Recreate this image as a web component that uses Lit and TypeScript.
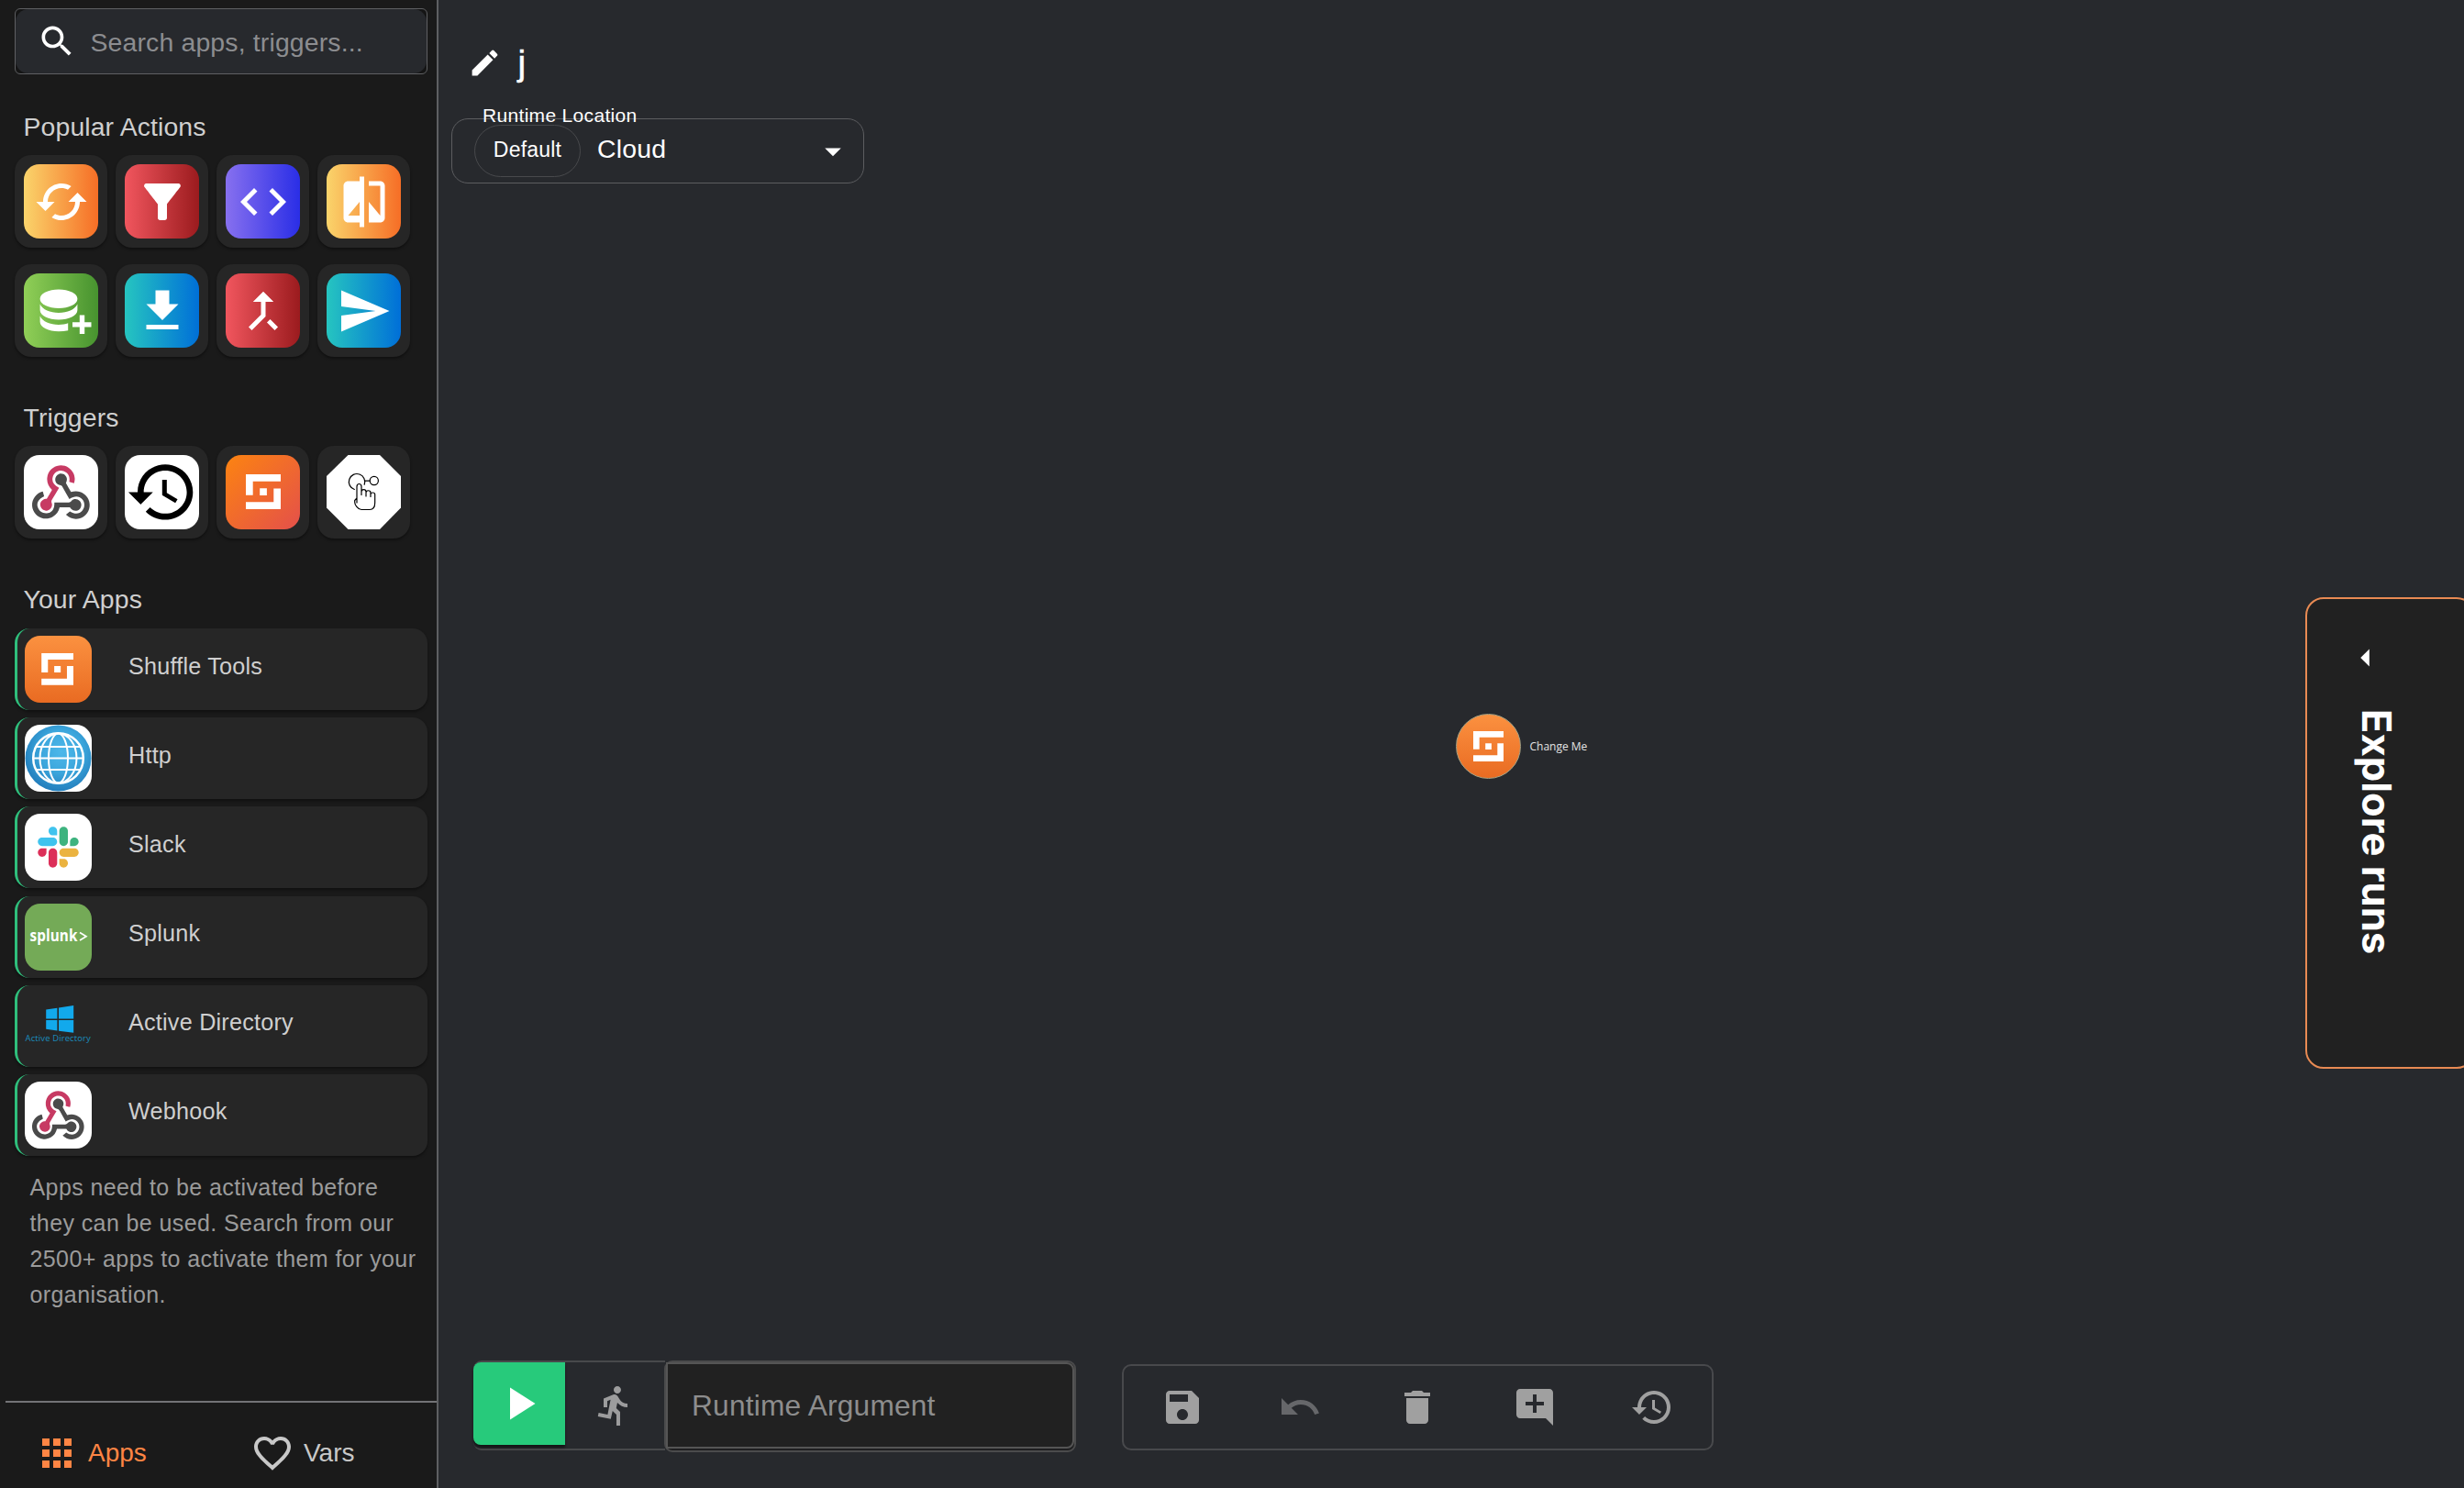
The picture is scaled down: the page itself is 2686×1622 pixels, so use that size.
import { LitElement, html, css, svg } from "lit";
import type { SVGTemplateResult, TemplateResult } from "lit";
import { customElement, property } from "lit/decorators.js";

const paths: Record<string, string> = {
  search:
    "M15.5 14h-.79l-.28-.27C15.41 12.59 16 11.11 16 9.5 16 5.91 13.09 3 9.5 3S3 5.91 3 9.5 5.91 16 9.5 16c1.61 0 3.09-.59 4.23-1.57l.27.28v.79l5 4.99L20.49 19l-4.99-5zm-6 0C7.01 14 5 11.99 5 9.5S7.01 5 9.5 5 14 7.01 14 9.5 11.99 14 9.5 14z",
  loop: "m19 8-4 4h3c0 3.31-2.69 6-6 6-1.01 0-1.97-.25-2.8-.7l-1.46 1.46C8.97 19.54 10.43 20 12 20c4.42 0 8-3.58 8-8h3l-4-4zM6 12c0-3.31 2.69-6 6-6 1.01 0 1.97.25 2.8.7l1.46-1.46C15.03 4.46 13.57 4 12 4c-4.42 0-8 3.58-8 8H1l4 4 4-4H6z",
  filter:
    "M4.25 5.61C6.27 8.2 10 13 10 13v6c0 .55.45 1 1 1h2c.55 0 1-.45 1-1v-6s3.72-4.8 5.74-7.39c.51-.66.04-1.61-.79-1.61H5.04c-.83 0-1.3.95-.79 1.61z",
  code: "M9.4 16.6 4.8 12l4.6-4.6L8 6l-6 6 6 6 1.4-1.4zm5.2 0 4.6-4.6-4.6-4.6L16 6l6 6-6 6-1.4-1.4z",
  compare:
    "M10 3H5c-1.1 0-2 .9-2 2v14c0 1.1.9 2 2 2h5v2h2V1h-2v2zm0 15H5l5-6v6zm9-15h-5v2h5v13l-5-6v9h5c1.1 0 2-.9 2-2V5c0-1.1-.9-2-2-2z",
  download: "M19 9h-4V3H9v6H5l7 7 7-7zM5 18v2h14v-2H5z",
  merge:
    "M17 20.41 18.41 19 15 15.59 13.59 17 17 20.41zM7.5 8H11v5.59L5.59 19 7 20.41l6-6V8h3.5L12 3.5 7.5 8z",
  send: "M2.01 21 23 12 2.01 3 2 10l15 2-15 2z",
  history:
    "M13 3c-4.97 0-9 4.03-9 9H1l3.89 3.89.07.14L9 12H6c0-3.87 3.13-7 7-7s7 3.13 7 7-3.13 7-7 7c-1.93 0-3.68-.79-4.94-2.06l-1.42 1.42C8.27 19.99 10.51 21 13 21c4.97 0 9-4.03 9-9s-4.03-9-9-9zm-1 5v5l4.28 2.54.72-1.21-3.5-2.08V8H12z",
  apps: "M4 8h4V4H4v4zm6 12h4v-4h-4v4zm-6 0h4v-4H4v4zm0-6h4v-4H4v4zm6 0h4v-4h-4v4zm6-10v4h4V4h-4zm-6 4h4V4h-4v4zm6 6h4v-4h-4v4zm0 6h4v-4h-4v4z",
  heart:
    "M16.5 3c-1.74 0-3.41.81-4.5 2.09C10.91 3.81 9.24 3 7.5 3 4.42 3 2 5.42 2 8.5c0 3.78 3.4 6.86 8.55 11.54L12 21.35l1.45-1.32C18.6 15.36 22 12.28 22 8.5 22 5.42 19.58 3 16.5 3zm-4.4 15.55-.1.1-.1-.1C7.14 14.24 4 11.39 4 8.5 4 6.5 5.5 5 7.5 5c1.54 0 3.04.99 3.57 2.36h1.87C13.46 5.99 14.96 5 16.5 5c2 0 3.5 1.5 3.5 3.5 0 2.89-3.14 5.74-7.9 10.05z",
  edit: "M3 17.25V21h3.75L17.81 9.94l-3.75-3.75L3 17.25zM20.71 7.04c.39-.39.39-1.02 0-1.41l-2.34-2.34a.9959.9959 0 0 0-1.41 0l-1.83 1.83 3.75 3.75 1.83-1.83z",
  down: "M7 10l5 5 5-5z",
  left: "M14 7l-5 5 5 5z",
  play: "M8 5v14l11-7z",
  run: "M13.49 5.48c1.1 0 2-.9 2-2s-.9-2-2-2-2 .9-2 2 .9 2 2 2zm-3.6 13.9 1-4.4 2.1 2v6h2v-7.5l-2.1-2 .6-3c1.3 1.5 3.3 2.5 5.5 2.5v-2c-1.9 0-3.5-1-4.3-2.4l-1-1.6c-.4-.6-1-1-1.7-1-.3 0-.5.1-.8.1l-5.2 2.2v4.7h2v-3.4l1.8-.7-1.6 8.1-4.9-1-.4 2 7 1.4z",
  save: "M17 3H5c-1.11 0-2 .9-2 2v14c0 1.1.89 2 2 2h14c1.1 0 2-.9 2-2V7l-4-4zm-5 16c-1.66 0-3-1.34-3-3s1.34-3 3-3 3 1.34 3 3-1.34 3-3 3zm3-10H5V5h10v4z",
  undo: "M12.5 8c-2.65 0-5.05.99-6.9 2.6L2 7v9h9l-3.62-3.62c1.39-1.16 3.16-1.88 5.12-1.88 3.54 0 6.55 2.31 7.6 5.5l2.37-.78C21.08 11.03 17.15 8 12.5 8z",
  trash: "M6 19c0 1.1.9 2 2 2h8c1.1 0 2-.9 2-2V7H6v12zM19 4h-3.500l-1-1h-5l-1 1H5v2h14V4z",
  comment:
    "M21.99 4c0-1.1-.89-2-1.99-2H4c-1.1 0-2 .9-2 2v12c0 1.1.9 2 2 2h14l4 4-.01-18zM17 11h-4v4h-2v-4H7V9h4V5h2v4h4v2z",
};

const icon = (name: string, size: number) => html`
  <svg width=${size} height=${size} viewBox="0 0 24 24" fill="currentColor"><path d=${paths[name]} /></svg>
`;

/* Shuffle mark drawn in a 38 unit box. */
const shuffleMark = svg`
  <path d="M0 0H38V7.7H7.7V22.8H0ZM30.3 15.4H38V38H0V30.3H30.3ZM15.2 15.2H22.9V22.9H15.2Z" fill="#fff" />
`;

const webhookMark = svg`
  <path fill="#C73A63" d="M119.540432,100.502743 C108.930124,118.338815 98.7646301,135.611455 88.3876025,152.753617 C85.7226696,157.154315 84.4040417,160.738531 86.5332204,166.333309 C92.4107024,181.787152 84.1193605,196.825836 68.5350381,200.908244 C53.8383677,204.759349 39.5192953,195.099955 36.6032893,179.365384 C34.0194114,165.437749 44.8274148,151.78491 60.1824106,149.608284 C61.4694072,149.424428 62.7821041,149.402681 64.944891,149.240571 C72.469175,136.623655 80.1773157,123.700312 88.3025935,110.073173 C73.611854,95.4654658 64.8677898,78.3885437 66.803227,57.2292132 C68.1712787,42.2715849 74.0527146,29.3462646 84.8033863,18.7517722 C105.393354,-1.53572199 136.805164,-4.82141828 161.048542,10.7510424 C184.333097,25.7086706 194.996783,54.8450075 185.906752,79.7822957 C179.052655,77.9239597 172.151111,76.049808 164.563565,73.9917997 C167.418285,60.1274266 165.306899,47.6765751 155.95591,37.0109123 C149.777932,29.9690049 141.850349,26.2780332 132.835442,24.9178894 C114.764113,22.1877169 97.0209573,33.7983633 91.7563309,51.5355878 C85.7800012,71.6669027 94.8245623,88.1111998 119.540432,100.502743 Z" />
  <path fill="#4B4B4B" d="M149.841194,79.4106285 C157.316054,92.5969067 164.905578,105.982857 172.427885,119.246236 C210.44865,107.483365 239.114472,128.530009 249.398582,151.063322 C261.81978,178.282014 253.328765,210.520191 228.933162,227.312431 C203.893073,244.551464 172.226236,241.605803 150.040866,219.46195 C155.694953,214.729124 161.376716,209.974552 167.44794,204.895759 C189.360489,219.088306 208.525074,218.420096 222.753207,201.614016 C234.885769,187.277151 234.622834,165.900356 222.138374,151.863988 C207.730339,135.66681 188.431321,135.172572 165.103273,150.721309 C155.426087,133.553447 145.58086,116.521995 136.210101,99.2295848 C133.05093,93.4015266 129.561608,90.0209366 122.440622,88.7873178 C110.547271,86.7253555 102.868785,76.5124151 102.408155,65.0698097 C101.955433,53.7537294 108.621719,43.5249733 119.04224,39.5394355 C129.363912,35.5914599 141.476705,38.7783085 148.419765,47.554004 C154.093621,54.7244134 155.896602,62.7943365 152.911402,71.6372484 C152.081082,74.1025091 151.00562,76.4886916 149.841194,79.4106285 Z" />
  <path fill="#4A4A4A" d="M167.706921,187.209935 L121.936499,187.209935 C117.54964,205.253587 108.074103,219.821756 91.7464461,229.085759 C79.0544063,236.285822 65.3738898,238.72736 50.8136292,236.376762 C24.0061432,232.053165 2.08568567,207.920497 0.156179306,180.745298 C-2.02835403,149.962159 19.1309765,122.599149 47.3341915,116.452801 C49.2814904,123.524363 51.2485589,130.663141 53.1958579,137.716911 C27.3195169,150.919004 18.3639187,167.553089 25.6054984,188.352614 C31.9811726,206.657224 50.0900643,216.690262 69.7528413,212.809503 C89.8327554,208.847688 99.9567329,192.160226 98.7211371,165.37844 C117.75722,165.37844 136.809118,165.180745 155.847178,165.475311 C163.280522,165.591951 169.019617,164.820939 174.620326,158.267339 C183.840836,147.48306 200.811003,148.455721 210.741239,158.640984 C220.88894,169.049642 220.402609,185.79839 209.663799,195.768166 C199.302587,205.38802 182.933414,204.874012 173.240413,194.508846 C171.247644,192.37176 169.677943,189.835329 167.706921,187.209935 Z" />
`;

const art = (size: number, content: SVGTemplateResult) => html`
  <svg width=${size} height=${size} viewBox="0 0 ${size} ${size}">${content}</svg>
`;

const databaseArt = art(81, svg`
  <g fill="#fff">
    <ellipse cx="38" cy="27.7" rx="20.4" ry="10.3" />
    <path d="M17.6 33.5C20.5 39.5 28.5 43 38 43S55.5 39.5 58.4 33.5V40C58.4 46 49 50.5 38 50.5S17.6 46 17.6 40Z" />
    <path d="M17.6 46.5C20.5 52.5 28.5 56 38 56C42 56 45.5 55.3 48.2 54.3V62.3C45 62.9 41.5 63.3 38 63.3C27 63.3 17.6 58.8 17.6 52.8Z" />
    <path d="M60.8 45.5H66.2V53.3H73.5V58.5H66.2V66H60.8V58.5H53V53.3H60.8Z" />
  </g>
`);

const webhookTile = art(81, svg`<g transform="translate(9 11) scale(.246)">${webhookMark}</g>`);
const historyTile = art(81, svg`<g transform="translate(.6 .2) scale(3.35)"><path d=${paths.history} /></g>`);
const shuffleTile = art(81, svg`<g transform="translate(22 21)">${shuffleMark}</g>`);
const inputTile = art(81, svg`
  <path d="M23.5 0H58L81 23V57.5L58 81H23.5L0 57.5V23Z" fill="#fff" />
  <g fill="none" stroke="#000" stroke-width="1.2" stroke-linejoin="round" stroke-linecap="round">
    <path d="M30.3 37.5A8.7 8.7 0 1 1 41.2 32.2" />
    <circle cx="51.8" cy="28" r="4.6" />
    <path d="M41.6 28.2H47" />
    <path d="M33 49V34.5C33 30.5 38 30.5 38 34.5V43.5M38 40C38 36.8 43 36.8 43 40V45M43 41C43 38 48 38 48 41V45.5M48 43C48 40.3 52.7 40.3 52.7 43V52C52.7 56.5 50.5 59.5 47 59.5H38C34 59.5 30.7 54 30.7 51.5V49.5L33 47V52" />
  </g>
`);

const shuffleApp = art(73, svg`
  <g transform="translate(18.2 19) scale(.916)">${shuffleMark}</g>
`);
const httpApp = art(73, svg`
  <defs>
    <radialGradient id="globe" cx=".55" cy=".4" r=".65">
      <stop offset="0" stop-color="#4db8ea" /><stop offset=".5" stop-color="#3ba6dc" /><stop offset="1" stop-color="#1f78b8" />
    </radialGradient>
  </defs>
  <circle cx="36.5" cy="36.5" r="36" fill="url(#globe)" />
  <g fill="none" stroke="#fff" stroke-width="2">
    <circle cx="36.5" cy="36.5" r="27.3" stroke-width="2.5" />
    <ellipse cx="36.5" cy="36.5" rx="10.5" ry="27" />
    <ellipse cx="36.5" cy="36.5" rx="20" ry="27" />
    <path d="M9 36.5H64M13 24H60M13 49H60" />
  </g>
`);
const slackApp = art(73, svg`
  <g transform="translate(14 14) scale(.354)">
    <path fill="#DC2F59" d="M27.2 80c0 7.3-5.9 13.2-13.2 13.2C6.7 93.2.8 87.3.8 80c0-7.3 5.9-13.2 13.2-13.2h13.2V80zm6.6 0c0-7.3 5.9-13.2 13.2-13.2 7.3 0 13.2 5.9 13.2 13.2v33c0 7.3-5.9 13.2-13.2 13.2-7.3 0-13.2-5.9-13.2-13.2V80z" />
    <path fill="#3FC3EE" d="M47 27c-7.3 0-13.2-5.9-13.2-13.2C33.8 6.5 39.7.6 47 .6c7.3 0 13.2 5.9 13.2 13.2V27H47zm0 6.7c7.3 0 13.2 5.9 13.2 13.2 0 7.3-5.9 13.2-13.2 13.2H13.9C6.6 60.1.7 54.2.7 46.9c0-7.3 5.9-13.2 13.2-13.2H47z" />
    <path fill="#3EB37F" d="M99.9 46.9c0-7.3 5.9-13.2 13.2-13.2 7.3 0 13.2 5.9 13.2 13.2 0 7.3-5.9 13.2-13.2 13.2H99.9V46.9zm-6.6 0c0 7.3-5.9 13.2-13.2 13.2-7.3 0-13.2-5.9-13.2-13.2V13.8C66.9 6.5 72.8.6 80.1.6c7.3 0 13.2 5.9 13.2 13.2v33.1z" />
    <path fill="#EBB340" d="M80.1 99.8c7.3 0 13.2 5.9 13.2 13.2 0 7.3-5.9 13.2-13.2 13.2-7.3 0-13.2-5.9-13.2-13.2V99.8h13.2zm0-6.6c-7.3 0-13.2-5.9-13.2-13.2 0-7.3 5.9-13.2 13.2-13.2h33.1c7.3 0 13.2 5.9 13.2 13.2 0 7.3-5.9 13.2-13.2 13.2H80.1z" />
  </g>
`);
const splunkApp = art(73, svg`
  <text x="5.5" y="41.3" textLength="52" lengthAdjust="spacingAndGlyphs" font-family="'Open Sans', sans-serif" font-weight="700" font-size="17.5" fill="#fff">splunk</text>
  <path d="M60 31.5L67 35.7L60 40" fill="none" stroke="#fff" stroke-width="1.7" />
`);
const directoryApp = art(73, svg`
  <path fill="#12A9EC" d="M23.2 18.5L35.4 16.7V28.5H23.2ZM37 16.500L53.2 14V28.5H37ZM23.2 30H35.4V41.5L23.2 39.7ZM37 30H53.2V43.8L37 41.7Z" />
  <text x=".5" y="53.2" textLength="71.5" lengthAdjust="spacingAndGlyphs" font-family="'Noto Sans', sans-serif" font-size="9.2" fill="#1B87B5">Active Directory</text>
`);
const webhookApp = art(73, svg`<g transform="translate(8 10) scale(.222)">${webhookMark}</g>`);

interface Tile {
  look: string;
  content: TemplateResult;
}

const actions: Tile[] = [
  { look: "orange", content: icon("loop", 60) },
  { look: "red", content: icon("filter", 60) },
  { look: "purple", content: icon("code", 60) },
  { look: "orange", content: icon("compare", 60) },
  { look: "green", content: databaseArt },
  { look: "blue", content: icon("download", 60) },
  { look: "red", content: icon("merge", 60) },
  { look: "blue", content: icon("send", 60) },
];

const triggers: Tile[] = [
  { look: "white", content: webhookTile },
  { look: "white", content: historyTile },
  { look: "ember", content: shuffleTile },
  { look: "plain", content: inputTile },
];

const apps = [
  { name: "Shuffle Tools", look: "shuffle", content: shuffleApp },
  { name: "Http", look: "white", content: httpApp },
  { name: "Slack", look: "white", content: slackApp },
  { name: "Splunk", look: "splunk", content: splunkApp },
  { name: "Active Directory", look: "plain", content: directoryApp },
  { name: "Webhook", look: "white", content: webhookApp },
];

@customElement("tile-grid")
class TileGrid extends LitElement {
  @property({ attribute: false }) tiles: Tile[] = [];

  static styles = css`
    :host { display: grid; grid-template-columns: repeat(4, 101px); gap: 18px 9px; }
    .tile {
      height: 101px; border-radius: 18px; background: #262626; box-sizing: border-box; padding: 10px;
      box-shadow: 0 2px 3px rgba(0, 0, 0, 0.4);
    }
    .face {
      width: 81px; height: 81px; border-radius: 17px; overflow: hidden; color: #fff;
      display: flex; align-items: center; justify-content: center;
    }
    svg { display: block; flex: none; }
    .orange { background: linear-gradient(90deg, #fad46b, #f66e26); }
    .red { background: linear-gradient(90deg, #f1565e, #9b1b1e); }
    .purple { background: linear-gradient(90deg, #8770ef, #2a2ee6); }
    .green { background: linear-gradient(90deg, #90cf57, #47932f); }
    .blue { background: linear-gradient(90deg, #26c5c0, #006fd8); }
    .white { background: #fff; }
    .ember { background: linear-gradient(135deg, #fb8114 5%, #e4504a 100%); }
    .plain { border-radius: 0; }
  `;

  render() {
    return this.tiles.map((t) => html`<div class="tile"><div class="face ${t.look}">${t.content}</div></div>`);
  }
}

@customElement("side-panel")
class SidePanel extends LitElement {
  static styles = css`
    :host {
      display: flex; flex-direction: column; width: 478px; height: 1622px; box-sizing: border-box; flex: none;
      padding-top: 9px; background: #1a1a1a; border-right: 2px solid #5e5f62; color: #cfcfcf;
      font: 28.4px/40px "Liberation Sans", Arial, sans-serif; letter-spacing: 0.12px;
    }
    svg { display: block; flex: none; }
    .search {
      width: 450px; height: 72px; margin-left: 16px; box-sizing: border-box; border: 1px solid #5f6063;
      border-radius: 6px; background: #151515; flex: none;
    }
    .search-inner {
      height: 70px; border-radius: 14px; background: #27292d; display: flex; align-items: center;
      gap: 14.5px; padding-left: 23px; color: #fff; box-sizing: border-box;
    }
    .hint { color: #8c8d90; letter-spacing: 0.16px; padding-top: 1px; }
    .heading { padding-left: 25.5px; margin-bottom: 11px; margin-top: 46px; flex: none; }
    .first { margin-top: 37px; }
    .last { margin-bottom: 12px; }
    .grid { margin-left: 16px; flex: none; }
    .list { display: flex; flex-direction: column; gap: 8.2px; margin-left: 16px; width: 450px; }
    .app {
      height: 89px; box-sizing: border-box; border-left: 3px solid #2fbf7c; border-radius: 16px; background: #262626;
      display: flex; align-items: center; padding-left: 8px; gap: 40px; box-shadow: 0 2px 3px rgba(0, 0, 0, 0.4);
    }
    .logo { width: 73px; height: 73px; border-radius: 17px; overflow: hidden; flex: none; }
    .white { background: #fff; }
    .shuffle { background: linear-gradient(180deg, #fb9140, #e96b22); }
    .splunk { background: #74aa57; }
    .plain { border-radius: 0; }
    .name { font-size: 25.2px; padding-bottom: 8px; letter-spacing: 0.22px; }
    .note {
      margin: 15px 10px 0 32.5px; font-size: 25px; line-height: 39px; color: #9b9b9b; letter-spacing: 0.4px;
      white-space: nowrap;
    }
    .tabs {
      margin: auto 0 0 6px; height: 95px; box-sizing: border-box; border-top: 2px solid #737377;
      display: grid; grid-template-columns: 235px 235px; padding-top: 16px; align-items: center; font-size: 28px;
    }
    .tab { display: flex; align-items: center; gap: 10px; padding-left: 32px; color: #c8c8c8; letter-spacing: 0; }
    .active { color: #ff8544; }
  `;

  render() {
    return html`
      <div class="search">
        <div class="search-inner">${icon("search", 44)}<span class="hint">Search apps, triggers...</span></div>
      </div>
      <div class="heading first">Popular Actions</div>
      <tile-grid class="grid" .tiles=${actions}></tile-grid>
      <div class="heading">Triggers</div>
      <tile-grid class="grid" .tiles=${triggers}></tile-grid>
      <div class="heading last">Your Apps</div>
      <div class="list">
        ${apps.map(
          (a) => html`<div class="app"><div class="logo ${a.look}">${a.content}</div><span class="name">${a.name}</span></div>`,
        )}
      </div>
      <div class="note">
        Apps need to be activated before<br />they can be used. Search from our<br />2500+ apps to activate them for
        your<br />organisation.
      </div>
      <div class="tabs">
        <div class="tab active">${icon("apps", 48)}<span>Apps</span></div>
        <div class="tab">${icon("heart", 48)}<span>Vars</span></div>
      </div>
    `;
  }
}

@customElement("workflow-canvas")
class WorkflowCanvas extends LitElement {
  static styles = css`
    :host {
      display: flex; flex-direction: column; flex: 1; height: 1622px; position: relative; overflow: hidden;
      background: #27292d; color: #fff; font-family: "Liberation Sans", Arial, sans-serif;
    }
    svg { display: block; flex: none; }
    .title {
      height: 129px; box-sizing: border-box; padding: 8px 0 0 32px; display: flex; align-items: center;
      gap: 17.5px; font-size: 39px; line-height: 44px;
    }
    .letter { padding-top: 1px; -webkit-text-stroke: 0.5px #fff; }
    .select {
      width: 450px; height: 71px; margin-left: 14px; box-sizing: border-box; border: 1px solid #5c5d60;
      border-radius: 18px; display: flex; align-items: center; padding: 0 12px 0 24px; position: relative;
    }
    .label {
      position: absolute; left: 33px; top: -18px; font-size: 21px; line-height: 28px; letter-spacing: 0.32px;
      white-space: nowrap;
    }
    .chip {
      width: 116px; height: 57px; box-sizing: border-box; border: 1px solid #48494c; border-radius: 29px;
      display: flex; align-items: center; justify-content: center; font-size: 23px; letter-spacing: 0.2px;
      padding-bottom: 2px; 
    }
    .value { font-size: 28.4px; margin-left: 18px; padding-bottom: 5px; flex: 1; letter-spacing: 0.2px; }
    .node { position: absolute; left: 1109px; top: 778px; display: flex; align-items: center; gap: 9.5px; }
    .disc {
      width: 71px; height: 71px; box-sizing: border-box; border: 1px solid #a5a284; border-radius: 50%;
      background: linear-gradient(180deg, #fb9140, #e96b22); display: flex; align-items: center;
      justify-content: center;
    }
    .node-name { font: 12px/16px "Open Sans", "Noto Sans", sans-serif; color: #e4e4e4; }
    .runs {
      position: absolute; right: -12px; top: 651px; width: 185px; height: 514px; box-sizing: border-box;
      border: 2px solid #e88a53; border-radius: 20px; background: #212121; display: flex; flex-direction: column;
      padding: 41px 0 0 41px;
    }
    .runs-name {
      font: 700 43.6px/50px Inter, sans-serif; writing-mode: vertical-rl; margin-top: 33px; margin-left: 9px;
      width: 50px; white-space: nowrap;
    }
    .bars { margin: auto 0 39px 38px; display: flex; align-items: flex-start; gap: 50px; }
    .runbar { display: flex; align-items: flex-start; }
    .actions {
      width: 209px; height: 98px; box-sizing: border-box; border: 2px solid #48494b; border-right: 0;
      border-left-width: 0; border-radius: 9px 0 0 9px; display: flex; align-items: flex-start;
    }
    .play {
      width: 100px; height: 90px; background: #27ca7b; border-radius: 8px 0 0 8px; display: flex;
      align-items: center; justify-content: center; box-shadow: 0 3px 3px rgba(0, 0, 0, 0.5);
    }
    .runner { width: 107px; height: 93px; display: flex; align-items: center; justify-content: center; color: #9c9c9d; }
    .field {
      width: 449px; height: 100px; box-sizing: border-box; border: 2px solid #4b4b4c; border-radius: 9px;
      background: #1f1f20; margin-left: -1px;
    }
    .input {
      height: 94px; box-sizing: border-box; border: 2px solid #555555; border-radius: 0 8px 8px 0;
      background: #212121; display: flex; align-items: center; padding-left: 26px; font-size: 31.7px;
      color: #8d8d8d; letter-spacing: 0.2px;
    }
    .tools {
      width: 645px; height: 94px; box-sizing: border-box; margin-top: 4px; border: 2px solid #48494c; border-radius: 10px;
      display: grid; grid-template-columns: repeat(5, 128px); align-items: center; justify-items: center;
      color: #a0a0a0;
    }
    .off { color: #66676a; }
  `;

  render() {
    return html`
      <div class="title">${icon("edit", 37)}<span class="letter">j</span></div>
      <div class="select">
        <span class="label">Runtime Location</span>
        <span class="chip">Default</span>
        <span class="value">Cloud</span>
        ${icon("down", 42)}
      </div>
      <div class="node">
        <div class="disc">
          <svg width="33" height="33" viewBox="0 0 38 38">${shuffleMark}</svg>
        </div>
        <span class="node-name">Change Me</span>
      </div>
      <div class="runs">
        ${icon("left", 46)}
        <div class="runs-name">Explore runs</div>
      </div>
      <div class="bars">
        <div class="runbar">
          <div class="actions">
            <div class="play">${icon("play", 60)}</div>
            <div class="runner">${icon("run", 48)}</div>
          </div>
          <div class="field"><div class="input">Runtime Argument</div></div>
        </div>
        <div class="tools">
          ${icon("save", 48)}
          <span class="off">${icon("undo", 48)}</span>
          ${icon("trash", 48)} ${icon("comment", 48)} ${icon("history", 48)}
        </div>
      </div>
    `;
  }
}

@customElement("app-root")
class AppRoot extends LitElement {
  static styles = css`
    :host { display: flex; width: 100%; height: 1622px; overflow: hidden; }
  `;

  render() {
    return html`<side-panel></side-panel><workflow-canvas></workflow-canvas>`;
  }
}
